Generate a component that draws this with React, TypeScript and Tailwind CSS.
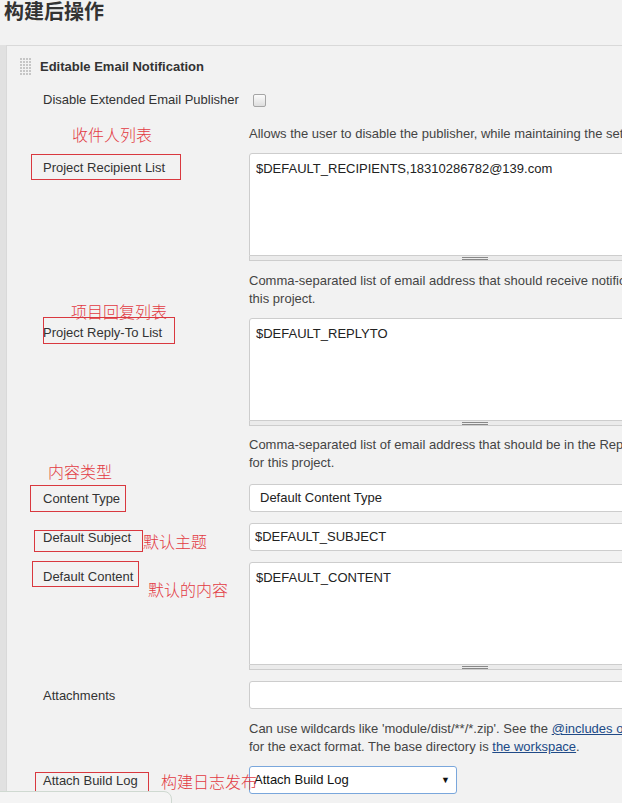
import React from "react";

function Label({ children }: { children?: React.ReactNode }) {
  return (
    <div className="w-[242px] shrink-0 pl-[36px] pt-[6px] text-[13px] leading-[18px] text-[#333]">
      {children}
    </div>
  );
}

function TextArea({ value }: { value: string }) {
  return (
    <div className="w-[452px]">
      <div className="h-[103px] rounded-t-[3px] border border-[#cdcdcd] bg-white px-[6px] pt-[6px] text-[13px] leading-[18px] text-[#222]">
        {value}
      </div>
      <div className="flex h-[5px] items-center justify-center border-x border-b border-[#cdcdcd] bg-[#ebebeb]">
        <div className="flex w-[26px] flex-col gap-[1px]">
          <div className="h-[1px] bg-[#888]" />
          <div className="h-[1px] bg-[#888]" />
        </div>
      </div>
    </div>
  );
}

function Help({ children, mt }: { children: React.ReactNode; mt: string }) {
  return (
    <div className={"flex " + mt}>
      <div className="w-[242px] shrink-0" />
      <div className="whitespace-nowrap text-[13px] leading-[18px] text-[#444]">{children}</div>
    </div>
  );
}

function DragHandle() {
  const dots: React.ReactNode[] = [];
  for (let r = 0; r < 6; r++) {
    for (let c = 0; c < 4; c++) {
      dots.push(<rect key={r + "-" + c} x={c * 3} y={r * 3} width="2" height="2" fill="#c6c6c6" />);
    }
  }
  return (
    <svg width="12" height="18" viewBox="0 0 12 18">
      {dots}
    </svg>
  );
}

export default function App() {
  return (
    <div className="relative h-[803px] w-[622px] overflow-hidden bg-[#f2f2f2] font-['Liberation_Sans','Noto_Sans_CJK_SC',Arial,sans-serif] text-[#333]">
      {/* Title */}
      <div className="flex h-[45px] items-start pl-[4px]">
        <div className="relative top-[-1px] font-['Noto_Sans_CJK_SC',sans-serif] text-[20px] font-bold leading-[24px] text-[#333]">
          构建后操作
        </div>
      </div>

      {/* Panel */}
      <div className="flex">
        <div className="h-[760px] w-[6px] shrink-0 bg-[#e1e1e1]" />
        <div className="flex-1 border-l border-t border-[#d9d9d9]">
          {/* header */}
          <div className="mt-[11px] flex h-[20px] items-center gap-[8px] pl-[13px]">
            <DragHandle />
            <div className="text-[13px] font-bold leading-[16px] text-[#333]">Editable Email Notification</div>
          </div>

          {/* Disable row */}
          <div className="mt-[13px] flex h-[20px] items-center">
            <div className="w-[242px] shrink-0 pl-[36px] text-[13px] leading-[18px] text-[#333]">
              Disable Extended Email Publisher
            </div>
            <div className="ml-[4px] h-[13px] w-[13px] rounded-[2px] border border-[#a5a5a5] bg-gradient-to-b from-[#fbfbfb] to-[#dedede]" />
          </div>

          <Help mt="mt-[15px]">Allows the user to disable the publisher, while maintaining the settings</Help>

          {/* Recipient list */}
          <div className="mt-[10px] flex">
            <Label>Project Recipient List</Label>
            <TextArea value="$DEFAULT_RECIPIENTS,18310286782@139.com" />
          </div>

          <Help mt="mt-[11px]">
            Comma-separated list of email address that should receive notifications for
            <br />
            this project.
          </Help>

          {/* Reply-to list */}
          <div className="mt-[10px] flex">
            <Label>Project Reply-To List</Label>
            <TextArea value="$DEFAULT_REPLYTO" />
          </div>

          <Help mt="mt-[10px]">
            Comma-separated list of email address that should be in the Reply-To list
            <br />
            for this project.
          </Help>

          {/* Content type */}
          <div className="mt-[12px] flex">
            <Label>Content Type</Label>
            <div className="flex h-[28px] w-[452px] items-center rounded-[3px] border border-[#cdcdcd] bg-white pl-[10px] text-[13px] text-[#222]">
              Default Content Type
            </div>
          </div>

          {/* Subject */}
          <div className="mt-[11px] flex">
            <Label>Default Subject</Label>
            <div className="flex h-[28px] w-[452px] items-center rounded-[3px] border border-[#cdcdcd] bg-white pl-[5px] text-[13px] text-[#222]">
              $DEFAULT_SUBJECT
            </div>
          </div>

          {/* Content */}
          <div className="mt-[11px] flex">
            <Label>Default Content</Label>
            <TextArea value="$DEFAULT_CONTENT" />
          </div>

          {/* Attachments */}
          <div className="mt-[11px] flex">
            <Label>Attachments</Label>
            <div className="h-[28px] w-[452px] rounded-[3px] border border-[#cdcdcd] bg-white" />
          </div>

          <Help mt="mt-[11px]">
            Can use wildcards like 'module/dist/**/*.zip'. See the{" "}
            <span className="text-[#204a87] underline">@includes of Ant fileset</span>
            <br />
            for the exact format. The base directory is{" "}
            <span className="text-[#204a87] underline">the workspace</span>.
          </Help>

          {/* Attach build log */}
          <div className="mt-[10px] flex">
            <Label>Attach Build Log</Label>
            <div className="flex h-[28px] w-[208px] items-center justify-between rounded-[3px] border border-[#7aa7dc] bg-white pl-[4px] pr-[6px] text-[13px] text-[#111]">
              <span>Attach Build Log</span>
              <span className="text-[9px] leading-none text-[#111]">▼</span>
            </div>
          </div>
        </div>
      </div>

      {/* Annotations (overlays) */}
      <div className="absolute left-[72px] top-[125px] font-['Noto_Sans_CJK_SC',sans-serif] text-[16px] font-light leading-[18px] text-[#e23a43]">收件人列表</div>
      <div className="absolute left-[31px] top-[154px] h-[26px] w-[150px] border border-[#d9383f]" />

      <div className="absolute left-[71px] top-[302px] font-['Noto_Sans_CJK_SC',sans-serif] text-[16px] font-light leading-[18px] text-[#e23a43]">项目回复列表</div>
      <div className="absolute left-[43px] top-[317px] h-[27px] w-[132px] border border-[#d9383f]" />

      <div className="absolute left-[48px] top-[462px] font-['Noto_Sans_CJK_SC',sans-serif] text-[16px] font-light leading-[18px] text-[#e23a43]">内容类型</div>
      <div className="absolute left-[30px] top-[485px] h-[27px] w-[96px] border border-[#d9383f]" />

      <div className="absolute left-[34px] top-[530px] h-[22px] w-[109px] border border-[#d9383f]" />
      <div className="absolute left-[143px] top-[532px] font-['Noto_Sans_CJK_SC',sans-serif] text-[16px] font-light leading-[18px] text-[#e23a43]">默认主题</div>

      <div className="absolute left-[32px] top-[561px] h-[26px] w-[107px] border border-[#d9383f]" />
      <div className="absolute left-[148px] top-[580px] font-['Noto_Sans_CJK_SC',sans-serif] text-[16px] font-light leading-[18px] text-[#e23a43]">默认的内容</div>

      <div className="absolute left-[35px] top-[772px] h-[20px] w-[114px] border border-[#d9383f]" />
      <div className="absolute left-[161px] top-[772px] font-['Noto_Sans_CJK_SC',sans-serif] text-[16px] font-light leading-[18px] text-[#e23a43]">构建日志发布</div>

      {/* bottom-left floating box */}
      <div className="absolute left-[-2px] top-[791px] h-[30px] w-[174px] rounded-tr-[8px] border border-[#cfd9d1] bg-[#f4f4f4]" />
    </div>
  );
}
